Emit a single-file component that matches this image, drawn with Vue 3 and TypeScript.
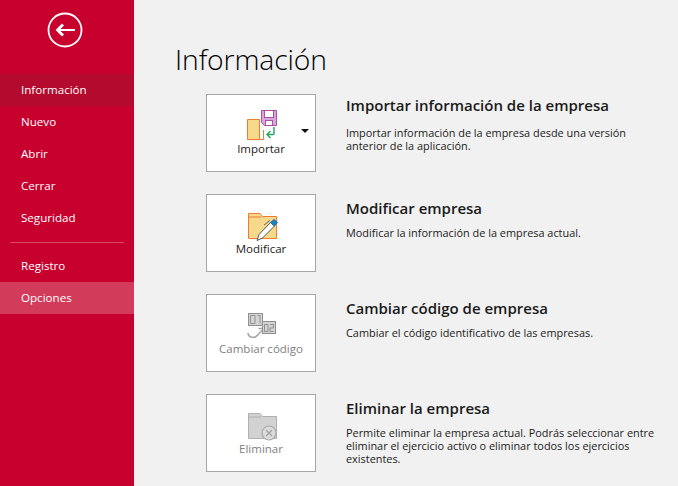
<script setup lang="ts">
interface NavItem {
  label: string;
  state?: "active" | "hover";
}

const topNav: NavItem[] = [
  { label: "Información", state: "active" },
  { label: "Nuevo" },
  { label: "Abrir" },
  { label: "Cerrar" },
  { label: "Seguridad" },
];

const bottomNav: NavItem[] = [{ label: "Registro" }, { label: "Opciones", state: "hover" }];
</script>

<template>
  <div class="page">
    <aside class="sidebar">
      <button class="back" type="button" aria-label="Volver">
        <svg width="36" height="36" viewBox="0 0 36 36" fill="none">
          <circle cx="18" cy="18" r="16.5" stroke="#fff" stroke-width="1.8" />
          <path d="M11 18H28" stroke="#fff" stroke-width="2" />
          <path d="M16 12.5L10.5 18L16 23.5" stroke="#fff" stroke-width="2.8" />
        </svg>
      </button>

      <nav class="nav">
        <a v-for="item in topNav" :key="item.label" class="nav__item" :class="item.state && `nav__item--${item.state}`">
          {{ item.label }}
        </a>
        <div class="nav__divider"></div>
        <a v-for="item in bottomNav" :key="item.label" class="nav__item" :class="item.state && `nav__item--${item.state}`">
          {{ item.label }}
        </a>
      </nav>
    </aside>

    <main class="main">
      <h1 class="title">Información</h1>

      <section class="row">
        <button class="tile" type="button">
          <svg class="tile__icon" width="40" height="32" viewBox="0 0 40 32" fill="none">
            <path d="M6.5 10.5H18.5V30.5H6.5Z" fill="#f7d98c" stroke="#ed7d31" />
            <path d="M18.5 30.5H22.5V21" stroke="#ed7d31" />
            <path d="M20.5 1.5H35.5V16.5H23.5L20.5 13.5Z" fill="#d9a6d9" stroke="#a94fa8" />
            <rect x="23.5" y="1.5" width="9" height="7" fill="#fff" stroke="#a94fa8" />
            <rect x="24.5" y="11.5" width="7" height="5" fill="#fff" stroke="#a94fa8" />
            <path d="M33 18V24.5C33 25 32.5 25.5 32 25.5H26.5" stroke="#22a45d" stroke-width="1.4" />
            <path d="M29.5 22L26 25.5L29.5 29" stroke="#22a45d" stroke-width="1.4" />
          </svg>
          <span class="tile__label">Importar</span>
          <span class="tile__caret"></span>
        </button>
        <div class="info">
          <h2 class="info__title info__title--first">Importar información de la empresa</h2>
          <p class="info__text info__text--spaced">Importar información de la empresa desde una versión<br />anterior de la aplicación.</p>
        </div>
      </section>

      <section class="row">
        <button class="tile" type="button">
          <svg class="tile__icon" width="36" height="30" viewBox="0 0 36 30" fill="none">
            <path d="M5.5 27.5V2.5H17L19.5 5.5H33.5V27.5Z" fill="#f7d98c" stroke="#ed7d31" />
            <path d="M5.5 6H18.5" stroke="#ed7d31" />
            <path d="M14 29.5L16 23.5L27.5 11.5L31.5 15L19.5 27Z" fill="#fff" stroke="#555" />
            <path d="M27.5 11.5L31 8.5L34.5 11.5L31.5 15Z" fill="#1f82c0" stroke="#1f6fa8" />
            <path d="M21 14L27 9.5" stroke="#666" />
          </svg>
          <span class="tile__label">Modificar</span>
        </button>
        <div class="info">
          <h2 class="info__title">Modificar empresa</h2>
          <p class="info__text">Modificar la información de la empresa actual.</p>
        </div>
      </section>

      <section class="row">
        <button class="tile tile--disabled" type="button">
          <svg class="tile__icon" width="32" height="30" viewBox="0 0 32 30" fill="none">
            <path d="M3 22C3 26 8 27.5 11 25.5C14 23.5 15.5 20.5 18 18.5" stroke="#a8a8a8" stroke-width="1.6" />
            <path d="M13.5 17.5H18.5V22.5" stroke="#a8a8a8" stroke-width="1.5" />
            <rect x="3.5" y="2.5" width="14" height="12" fill="#d4d4d4" stroke="#8f8f8f" />
            <rect x="17.5" y="10.5" width="13" height="12" fill="#d4d4d4" stroke="#8f8f8f" />
            <path d="M5.5 4.5H10V12.5H5.5ZM12.5 4.5H15V12.5" stroke="#8f8f8f" />
            <path d="M19.5 13.5H23V20.5H19.5ZM25 13.5H28.5V17H25V20.5H28.5" stroke="#8f8f8f" />
          </svg>
          <span class="tile__label">Cambiar código</span>
        </button>
        <div class="info">
          <h2 class="info__title">Cambiar código de empresa</h2>
          <p class="info__text">Cambiar el código identificativo de las empresas.</p>
        </div>
      </section>

      <section class="row">
        <button class="tile tile--disabled" type="button">
          <svg class="tile__icon" width="36" height="30" viewBox="0 0 36 30" fill="none">
            <path d="M5.5 27.5V2.5H17L19.5 5.5H33.5V27.5Z" fill="#d2d2d2" stroke="#b0b0b0" />
            <path d="M5.5 6H18.5" stroke="#b0b0b0" />
            <circle cx="26" cy="22" r="7" fill="#dcdcdc" stroke="#a8a8a8" stroke-width="1.2" />
            <path d="M23 19L29 25M29 19L23 25" stroke="#a0a0a0" stroke-width="1.2" />
          </svg>
          <span class="tile__label">Eliminar</span>
        </button>
        <div class="info">
          <h2 class="info__title">Eliminar la empresa</h2>
          <p class="info__text">Permite eliminar la empresa actual. Podrás seleccionar entre<br />eliminar el ejercicio activo o eliminar todos los ejercicios<br />existentes.</p>
        </div>
      </section>
    </main>
  </div>
</template>

<style scoped>
.page {
  display: flex;
  width: 678px;
  height: 486px;
  overflow: hidden;
  background: #f1f1f1;
  font-family: "Open Sans", "Noto Sans", sans-serif;
  color: #111;
}

.sidebar {
  flex: none;
  width: 134px;
  background: #c8002d;
  color: #fff;
}

.back {
  display: block;
  width: 36px;
  height: 36px;
  margin: 12px 0 26px 47px;
  padding: 0;
  border: none;
  background: none;
}

.back svg {
  display: block;
}

.nav {
  display: flex;
  flex-direction: column;
}

.nav__item {
  height: 32px;
  padding-left: 21px;
  font-size: 11.6px;
  line-height: 31px;
}

.nav__item--active {
  background: #b30a2d;
}

.nav__item--hover {
  background: #d33b5a;
}

.nav__divider {
  height: 1px;
  margin: 8px 10px 7px;
  background: #d94565;
}

.main {
  flex: 1;
  padding: 0 0 0 72px;
}

.title {
  margin: 0 0 0 -31px;
  height: 94px;
  padding-top: 39px;
  box-sizing: border-box;
  font-size: 28.3px;
  font-weight: 300;
  line-height: 40px;
  letter-spacing: -0.1px;
  color: #000;
}

.row {
  display: flex;
  gap: 30px;
  height: 78px;
  margin-bottom: 22px;
}

.tile {
  position: relative;
  flex: none;
  display: flex;
  flex-direction: column;
  align-items: center;
  justify-content: flex-end;
  width: 110px;
  height: 78px;
  padding: 0 0 14px;
  box-sizing: border-box;
  border: 1px solid #a6a6a6;
  background: #fff;
  font-family: inherit;
  color: #222;
}

.tile__icon {
  display: block;
}

.tile__label {
  font-size: 11.5px;
  line-height: 16px;
}

.tile--disabled .tile__label {
  color: #808080;
}

.tile__caret {
  position: absolute;
  top: 34px;
  right: 6px;
  border-top: 4px solid #111;
  border-left: 4px solid transparent;
  border-right: 4px solid transparent;
}

.info__title {
  margin: 0;
  padding-top: 3px;
  font-size: 15px;
  font-weight: 600;
  line-height: 22px;
  color: #1a1a1a;
}

.info__title--first {
  padding-top: 0;
}

.info__text {
  margin: 7px 0 0;
  font-size: 10.9px;
  line-height: 13px;
  color: #1a1a1a;
}

.info__text--spaced {
  margin-top: 10px;
}
</style>
